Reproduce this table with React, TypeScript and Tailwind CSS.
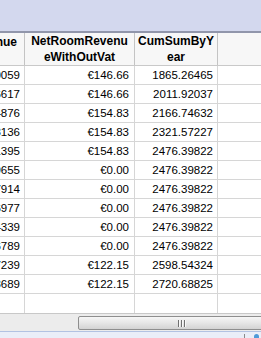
import React from "react";

const rows: [string, string, string][] = [
  ["0059", "€146.66", "1865.26465"],
  ["6617", "€146.66", "2011.92037"],
  ["4876", "€154.83", "2166.74632"],
  ["8136", "€154.83", "2321.57227"],
  ["1395", "€154.83", "2476.39822"],
  ["9655", "€0.00", "2476.39822"],
  ["7914", "€0.00", "2476.39822"],
  ["6977", "€0.00", "2476.39822"],
  ["4339", "€0.00", "2476.39822"],
  ["6789", "€0.00", "2476.39822"],
  ["7239", "€122.15", "2598.54324"],
  ["8689", "€122.15", "2720.68825"],
];

export default function App() {
  return (
    <div
      className="w-[261px] h-[338px] overflow-hidden flex flex-col bg-white text-black"
      style={{ fontFamily: '"Liberation Sans", Arial, sans-serif' }}
    >
      <div className="h-[31px] shrink-0 bg-[#d3d8ee]" />
      <div className="h-[2px] shrink-0 bg-[#9196ab]" />
      {/* header */}
      <div className="h-[33px] shrink-0 flex bg-[#f7f7f7] border-b border-[#c9c9c9] text-[12px] font-bold leading-[16px]">
        <div className="w-[25px] shrink-0 border-r border-[#c4c4c4] flex items-start justify-end pr-[7px] pt-[1px] overflow-hidden whitespace-nowrap">
          <span>nue</span>
        </div>
        <div className="w-[110px] shrink-0 border-r border-[#c4c4c4] flex flex-col items-center justify-center text-center">
          <span>NetRoomRevenu</span>
          <span>eWithOutVat</span>
        </div>
        <div className="w-[83px] shrink-0 border-r border-[#c4c4c4] flex flex-col items-center justify-center text-center">
          <span>CumSumByY</span>
          <span>ear</span>
        </div>
        <div className="flex-1" />
      </div>
      {/* rows */}
      {rows.map((r, i) => (
        <div key={i} className="h-[19px] shrink-0 flex border-b border-[#d6d6d6] text-[11.5px] leading-[18px]">
          <div className="w-[25px] shrink-0 border-r border-[#d6d6d6] flex justify-end pr-[4px] overflow-hidden whitespace-nowrap">
            <span className="shrink-0">{r[0]}</span>
          </div>
          <div className="w-[110px] shrink-0 border-r border-[#d6d6d6] text-right pr-[5px]">{r[1]}</div>
          <div className="w-[83px] shrink-0 border-r border-[#d6d6d6] text-right pr-[4px]">{r[2]}</div>
          <div className="flex-1" />
        </div>
      ))}
      <div className="h-[19px] shrink-0 flex">
        <div className="w-[25px] shrink-0 border-r border-[#d6d6d6]" />
        <div className="w-[110px] shrink-0 border-r border-[#d6d6d6]" />
        <div className="w-[83px] shrink-0 border-r border-[#d6d6d6]" />
        <div className="flex-1" />
      </div>
      {/* scrollbar */}
      <div className="h-[18px] shrink-0 flex bg-[#ececec] border-t border-[#c8c8c8] pt-[2px] pb-[1px] overflow-hidden">
        <div className="w-[78px] shrink-0" />
        <div className="w-[220px] shrink-0 rounded-[2px] border border-[#8e8e8e] bg-gradient-to-b from-[#f6f6f6] via-[#e6e6e6] to-[#d3d3d3] flex items-center pl-[99px]">
          <div className="flex gap-[1px] h-[7px]">
            <div className="w-[2px] bg-[#707070] border-r border-[#f8f8f8]" />
            <div className="w-[2px] bg-[#707070] border-r border-[#f8f8f8]" />
            <div className="w-[2px] bg-[#707070] border-r border-[#f8f8f8]" />
          </div>
        </div>
      </div>
      {/* bottom strip */}
      <div className="flex-1 flex border-t border-[#b2c2e2] bg-[#eaeef8]">
        <div className="w-[244px] shrink-0" />
        <div className="w-[1px] mt-[2px] bg-[#8a8a8a]" />
        <div className="flex-1 flex justify-end pr-[2px] pt-[2px]">
          <div className="w-[5px] h-[4px] rounded-t-full bg-[#4f9ad8]" />
        </div>
      </div>
    </div>
  );
}
